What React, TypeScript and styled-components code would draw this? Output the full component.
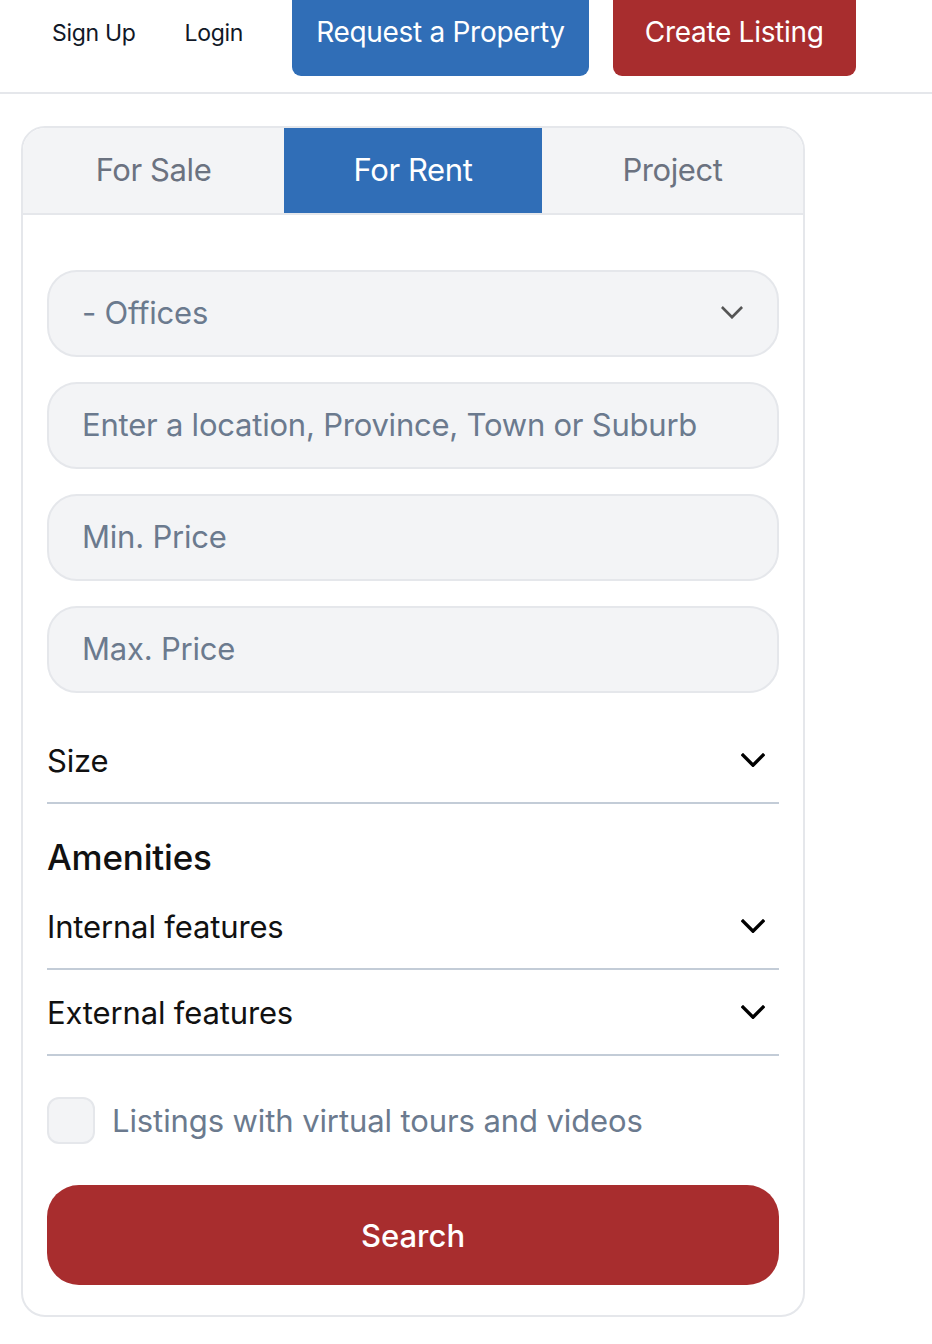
import React from "react";
import styled, { createGlobalStyle } from "styled-components";

const Global = createGlobalStyle`
  * { box-sizing: border-box; }
  body {
    margin: 0;
    background: #ffffff;
    font-family: Inter, "Noto Sans", "Liberation Sans", sans-serif;
    color: #111111;
  }
`;

const Header = styled.header`
  display: flex;
  align-items: flex-start;
  height: 94px;
  padding-left: 52px;
  border-bottom: 2px solid #e5e7eb;
`;

const NavLink = styled.a`
  font-size: 23px;
  line-height: 32px;
  padding-top: 17px;
  margin-right: 49px;
  color: #111827;
  letter-spacing: -0.3px;
`;

const HeaderButton = styled.button<{ $tone: "blue" | "red"; $pad: number }>`
  height: 76px;
  padding: 14px ${(p) => p.$pad}px 0;
  margin-right: 24px;
  border: none;
  border-radius: 0 0 9px 9px;
  background: ${(p) => (p.$tone === "blue" ? "#306eb7" : "#a82d2e")};
  color: #ffffff;
  font-family: inherit;
  font-size: 28px;
  line-height: 36px;
  letter-spacing: -0.3px;
  align-self: flex-start;
  display: flex;
  align-items: flex-start;
`;

const Card = styled.section`
  margin: 32px 0 0 21px;
  width: 784px;
  border: 2px solid #e5e7eb;
  border-radius: 24px;
  overflow: hidden;
  padding-bottom: 30px;
`;

const Tabs = styled.div`
  display: grid;
  grid-template-columns: 261px 258px 1fr;
  height: 87px;
  background: #f3f4f6;
  border-bottom: 2px solid #e5e7eb;
`;

const Tab = styled.div<{ $active?: boolean }>`
  display: flex;
  align-items: center;
  justify-content: center;
  font-size: 31px;
  letter-spacing: -0.4px;
  color: ${(p) => (p.$active ? "#ffffff" : "#6b7280")};
  background: ${(p) => (p.$active ? "#306eb7" : "transparent")};
  padding-bottom: 2px;
`;

const Body = styled.div`
  padding: 55px 24px 0;
  display: flex;
  flex-direction: column;
`;

const Field = styled.div`
  display: flex;
  align-items: center;
  justify-content: space-between;
  height: 87px;
  margin-bottom: 25px;
  padding: 0 34px 2px 33px;
  background: #f3f4f6;
  border: 2px solid #e5e7eb;
  border-radius: 30px;
  font-size: 31px;
  letter-spacing: -0.22px;
  color: #6b7a8e;
`;

const AccordionRow = styled.div`
  display: flex;
  align-items: center;
  justify-content: space-between;
  height: 86px;
  border-bottom: 2px solid #c3ccd7;
  padding-right: 14px;
  font-size: 31px;
  letter-spacing: -0.15px;
  color: #111111;
`;

const Heading = styled.h3`
  margin: 31px 0 5px;
  font-size: 35px;
  line-height: 44px;
  font-weight: 500;
  letter-spacing: -0.2px;
  color: #111111;
`;

const CheckRow = styled.label`
  display: flex;
  align-items: center;
  gap: 17px;
  margin-top: 41px;
  font-size: 31px;
  letter-spacing: -0.1px;
  color: #6b7a8e;
`;

const CheckBox = styled.span`
  width: 48px;
  height: 47px;
  border-radius: 12px;
  background: #f3f4f6;
  border: 2px solid #e5e7eb;
`;

const SearchButton = styled.button`
  margin-top: 41px;
  height: 100px;
  border: none;
  border-radius: 32px;
  background: #a82d2e;
  color: #ffffff;
  font-family: inherit;
  font-size: 31px;
  font-weight: 500;
  letter-spacing: 0px;
`;

const Chevron = ({ color, width, stroke }: { color: string; width: number; stroke: number }) => (
  <svg width={width} height={width * 0.6} viewBox="0 0 24 14" fill="none">
    <path d="M2 2l10 10L22 2" stroke={color} strokeWidth={stroke} strokeLinecap="square" strokeLinejoin="miter" />
  </svg>
);

export default function App() {
  return (
    <>
      <Global />
      <Header>
        <NavLink>Sign Up</NavLink>
        <NavLink>Login</NavLink>
        <HeaderButton $tone="blue" $pad={24}>Request a Property</HeaderButton>
        <HeaderButton $tone="red" $pad={32}>Create Listing</HeaderButton>
      </Header>
      <Card>
        <Tabs>
          <Tab>For Sale</Tab>
          <Tab $active>For Rent</Tab>
          <Tab>Project</Tab>
        </Tabs>
        <Body>
          <Field>
            <span>- Offices</span>
            <Chevron color="#555555" width={22} stroke={3} />
          </Field>
          <Field>Enter a location, Province, Town or Suburb</Field>
          <Field>Min. Price</Field>
          <Field>Max. Price</Field>
          <AccordionRow>
            <span>Size</span>
            <Chevron color="#000000" width={24} stroke={3.4} />
          </AccordionRow>
          <Heading>Amenities</Heading>
          <AccordionRow>
            <span>Internal features</span>
            <Chevron color="#000000" width={24} stroke={3.4} />
          </AccordionRow>
          <AccordionRow>
            <span>External features</span>
            <Chevron color="#000000" width={24} stroke={3.4} />
          </AccordionRow>
          <CheckRow>
            <CheckBox />
            Listings with virtual tours and videos
          </CheckRow>
          <SearchButton>Search</SearchButton>
        </Body>
      </Card>
    </>
  );
}
